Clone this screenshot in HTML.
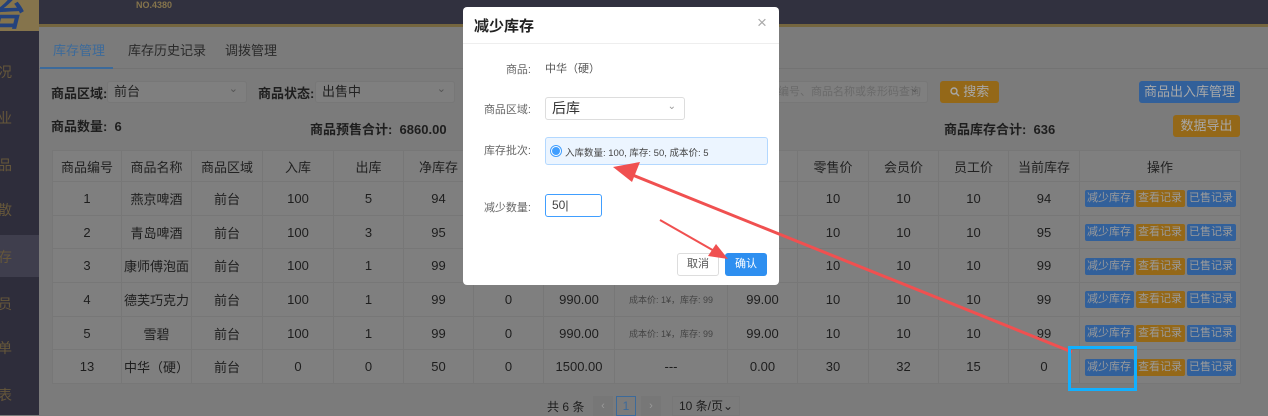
<!DOCTYPE html>
<html><head><meta charset="utf-8"><style>
*{margin:0;padding:0;box-sizing:border-box}
body{width:1268px;height:415px;overflow:hidden;background:#7b7b7b;font-family:"Liberation Sans","Noto Sans CJK SC",sans-serif;font-size:13px;color:#1e1e1e;position:relative}
.a{position:absolute;white-space:nowrap}
.top{left:0;top:0;width:1268px;height:24px;background:#31313f}
.gl{left:39px;top:24px;width:1229px;height:3px;background:#75663f}
.logo{left:0;top:0;width:39px;height:31px;background:#85744c;overflow:hidden}
.side{left:0;top:31px;width:39px;height:384px;background:#2e2d3b}
.si{color:#66573a;font-size:14px;left:-2px}
.sel{background:#7f7f7f;border:1px solid #777;border-radius:3px;height:22px;padding-left:6px;line-height:20px;color:#222}
.sel:after{content:"⌄";position:absolute;right:8px;top:-3px;font-size:11px;color:#555}
table{position:absolute;left:52px;top:150px;border-collapse:collapse;background:#7f7f7f}
td,th{border:1px solid #777;text-align:center;font-weight:normal;height:33.7px;padding:0;font-size:13px;color:#1e1e1e}
th{height:31px;color:#222}
.b{display:inline-block;width:49px;height:17px;line-height:17px;font-size:11px;color:#9a9a9a;border-radius:2px;margin:0 1px;background:#32609a}
.o{background:#946818}
.small{font-size:9px;color:#444}
.dlg{left:463px;top:7px;width:316px;height:278px;background:#fff;border-radius:4px}
.lbl{font-size:11px;color:#666;text-align:right;width:68px}
.btn{border-radius:3px;font-size:13px;text-align:center}
</style></head><body>
<div class="a top"></div>
<div class="a logo"><span class="a" style="left:-10px;top:-10px;font-size:32px;color:#24427c;font-weight:bold;font-style:italic">台</span></div>
<div class="a" style="left:136px;top:0px;font-size:9px;color:#85744c;font-weight:bold">NO.4380</div>
<div class="a gl"></div>
<div class="a side"></div>
<div class="a" style="left:0;top:235px;width:39px;height:42px;background:#3f3e4d"></div>
<div class="a si" style="top:62px">况</div>
<div class="a si" style="top:108px">业</div>
<div class="a si" style="top:155px">品</div>
<div class="a si" style="top:200px">散</div>
<div class="a si" style="top:247px">存</div>
<div class="a si" style="top:294px">员</div>
<div class="a si" style="top:338px">单</div>
<div class="a si" style="top:385px">表</div>
<div class="a" style="left:39px;top:27px;width:1229px;height:42px;border-bottom:1px solid #737373"></div>
<div class="a" style="left:53px;top:40px;color:#3c6a9a">库存管理</div>
<div class="a" style="left:40px;top:67px;width:73px;height:2px;background:#3c6a9a"></div>
<div class="a" style="left:128px;top:40px;color:#2a2a2a">库存历史记录</div>
<div class="a" style="left:225px;top:40px;color:#2a2a2a">调拨管理</div>
<div class="a" style="left:51px;top:83px;font-weight:bold">商品区域:</div>
<div class="a sel" style="left:107px;top:81px;width:140px">前台</div>
<div class="a" style="left:258px;top:83px;font-weight:bold">商品状态:</div>
<div class="a sel" style="left:315px;top:81px;width:140px">出售中</div>
<div class="a" style="left:51px;top:116px;font-weight:bold">商品数量:&nbsp; 6</div>
<div class="a" style="left:310px;top:119px;font-weight:bold">商品预售合计:&nbsp; 6860.00</div>
<div class="a sel" style="left:760px;top:81px;width:168px;color:#6a6a6a;font-size:11px">品编号、商品名称或条形码查询</div>
<div class="a btn" style="left:940px;top:81px;width:59px;height:22px;line-height:22px;background:#946818;color:#a8a8a8"><svg width="10" height="10" viewBox="0 0 10 10" style="vertical-align:-1px"><circle cx="4" cy="4" r="3" fill="none" stroke="#a8a8a8" stroke-width="1.4"/><line x1="6.3" y1="6.3" x2="9" y2="9" stroke="#a8a8a8" stroke-width="1.4"/></svg> 搜索</div>
<div class="a btn" style="left:1139px;top:81px;width:101px;height:22px;line-height:22px;background:#32609a;color:#a8a8a8">商品出入库管理</div>
<div class="a" style="left:944px;top:119px;font-weight:bold">商品库存合计:&nbsp; 636</div>
<div class="a btn" style="left:1173px;top:115px;width:67px;height:22px;line-height:22px;background:#946818;color:#a8a8a8">数据导出</div>
<table>
<tr><th style="width:69px">商品编号</th><th style="width:70px">商品名称</th><th style="width:71px">商品区域</th><th style="width:71px">入库</th><th style="width:70px">出库</th><th style="width:70px">净库存</th><th style="width:70px"></th><th style="width:71px"></th><th style="width:113px"></th><th style="width:70px">s</th><th style="width:71px">零售价</th><th style="width:70px">会员价</th><th style="width:70px">员工价</th><th style="width:71px">当前库存</th><th style="width:161px">操作</th></tr>
<tr><td>1</td><td>燕京啤酒</td><td>前台</td><td>100</td><td>5</td><td>94</td><td>0</td><td></td><td></td><td></td><td>10</td><td>10</td><td>10</td><td>94</td><td><span class="b">减少库存</span><span class="b o">查看记录</span><span class="b">已售记录</span></td></tr>
<tr><td>2</td><td>青岛啤酒</td><td>前台</td><td>100</td><td>3</td><td>95</td><td>0</td><td></td><td></td><td></td><td>10</td><td>10</td><td>10</td><td>95</td><td><span class="b">减少库存</span><span class="b o">查看记录</span><span class="b">已售记录</span></td></tr>
<tr><td>3</td><td>康师傅泡面</td><td>前台</td><td>100</td><td>1</td><td>99</td><td>0</td><td></td><td></td><td></td><td>10</td><td>10</td><td>10</td><td>99</td><td><span class="b">减少库存</span><span class="b o">查看记录</span><span class="b">已售记录</span></td></tr>
<tr><td>4</td><td>德芙巧克力</td><td>前台</td><td>100</td><td>1</td><td>99</td><td>0</td><td>990.00</td><td class="small">成本价: 1¥，库存: 99</td><td>99.00</td><td>10</td><td>10</td><td>10</td><td>99</td><td><span class="b">减少库存</span><span class="b o">查看记录</span><span class="b">已售记录</span></td></tr>
<tr><td>5</td><td>雪碧</td><td>前台</td><td>100</td><td>1</td><td>99</td><td>0</td><td>990.00</td><td class="small">成本价: 1¥，库存: 99</td><td>99.00</td><td>10</td><td>10</td><td>10</td><td>99</td><td><span class="b">减少库存</span><span class="b o">查看记录</span><span class="b">已售记录</span></td></tr>
<tr><td>13</td><td>中华（硬）</td><td>前台</td><td>0</td><td>0</td><td>50</td><td>0</td><td>1500.00</td><td>---</td><td>0.00</td><td>30</td><td>32</td><td>15</td><td>0</td><td><span class="b">减少库存</span><span class="b o">查看记录</span><span class="b">已售记录</span></td></tr>
</table>
<div class="a" style="left:547px;top:398px;font-size:12px">共 6 条</div>
<div class="a" style="left:593px;top:396px;width:20px;height:20px;background:#777;color:#999;text-align:center;font-size:11px;line-height:20px">‹</div>
<div class="a" style="left:616px;top:396px;width:20px;height:20px;border:1px solid #3c6a9a;color:#3c6a9a;text-align:center;line-height:18px;font-size:12px">1</div>
<div class="a" style="left:641px;top:396px;width:20px;height:20px;background:#777;color:#999;text-align:center;font-size:11px;line-height:20px">›</div>
<div class="a" style="left:672px;top:396px;width:68px;height:20px;border:1px solid #777;padding-left:6px;line-height:18px;font-size:12px">10 条/页⌄</div>

<div class="a dlg">
<div class="a" style="left:11px;top:8px;font-size:15px;font-weight:bold;color:#222">减少库存</div>
<div class="a" style="left:294px;top:6px;font-size:17px;color:#aaa">×</div>
<div class="a" style="left:0;top:36px;width:316px;height:1px;background:#eee"></div>
<div class="a lbl" style="left:0;top:54px">商品:</div>
<div class="a" style="left:82px;top:53px;font-size:11px;color:#555">中华（硬）</div>
<div class="a lbl" style="left:0;top:94px">商品区域:</div>
<div class="a" style="left:82px;top:90px;width:140px;height:23px;border:1px solid #ddd;border-radius:3px;padding-left:6px;line-height:21px;font-size:14px;color:#333">后库<span class="a" style="right:8px;top:-2px;font-size:10px;color:#999">⌄</span></div>
<div class="a lbl" style="left:0;top:135px">库存批次:</div>
<div class="a" style="left:82px;top:130px;width:223px;height:28px;border:1px solid #b3d8ff;background:#ecf5ff;border-radius:3px">
<span class="a" style="left:4px;top:7px;width:12px;height:12px;border-radius:50%;background:#fff;border:1px solid #409eff"><span class="a" style="left:1px;top:1px;width:8px;height:8px;border-radius:50%;background:#409eff"></span></span>
<span class="a" style="left:19px;top:7px;font-size:9.5px;color:#444">入库数量: 100, 库存: 50, 成本价: 5</span></div>
<div class="a lbl" style="left:0;top:192px">减少数量:</div>
<div class="a" style="left:82px;top:187px;width:57px;height:23px;border:1px solid #409eff;border-radius:3px;padding-left:6px;line-height:21px;font-size:12px;color:#444">50|</div>
<div class="a btn" style="left:214px;top:246px;width:42px;height:23px;border:1px solid #ddd;line-height:21px;font-size:11px;color:#555">取消</div>
<div class="a btn" style="left:262px;top:246px;width:42px;height:23px;background:#2e8ff0;line-height:23px;font-size:11px;color:#fff">确认</div>
</div>

<svg class="a" style="left:0;top:0" width="1268" height="415">
<line x1="1072" y1="352" x2="630" y2="174" stroke="#f05050" stroke-width="3"/>
<polygon points="613,167 640,162 632,182" fill="#f05050"/>
<line x1="660" y1="220" x2="716" y2="252" stroke="#f05050" stroke-width="2"/>
<polygon points="728,259 708,256 716,244" fill="#f05050"/>
<rect x="1069.5" y="347.5" width="66" height="42" fill="none" stroke="#12b0ff" stroke-width="3"/>
</svg>
</body></html>
